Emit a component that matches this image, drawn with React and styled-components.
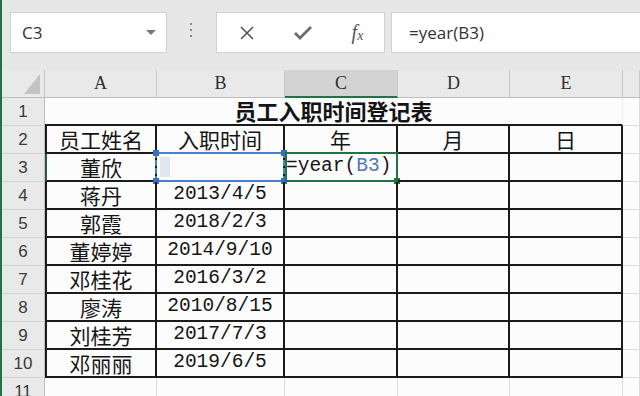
import styled, { createGlobalStyle } from 'styled-components';

const GlobalStyle = createGlobalStyle`
  html, body { margin: 0; padding: 0; background: #fff; }
  body { width: 640px; height: 396px; overflow: hidden; }
`;

const Window = styled.div`
  width: 640px;
  height: 396px;
  overflow: hidden;
  box-sizing: border-box;
  border-left: 2px solid #217346;
  background: #fcfcfd;
  display: flex;
  flex-direction: column;
`;

const FormulaBar = styled.div`
  flex: none;
  height: 70px;
  box-sizing: border-box;
  padding: 12px 0 0 8px;
  background: #e7e7e7;
  display: flex;
  align-items: flex-start;
`;

const NameBox = styled.div`
  width: 157px;
  height: 41px;
  box-sizing: border-box;
  background: #fff;
  border: 1px solid #d0d0d0;
  display: flex;
  align-items: center;
  justify-content: space-between;
  padding: 0 10px 0 11px;
  font-family: "Open Sans", "Liberation Sans", sans-serif;
  font-size: 17px;
  color: #333;
`;

const DropArrow = styled.span`
  width: 0;
  height: 0;
  border-left: 5px solid transparent;
  border-right: 5px solid transparent;
  border-top: 5px solid #777;
`;

const Grip = styled.div`
  width: 3px;
  margin: 11px 23px 0;
  display: flex;
  flex-direction: column;
  gap: 4px;
  span {
    width: 2px;
    height: 2px;
    background: #8a8a8a;
  }
`;

const ButtonBox = styled.div`
  width: 169px;
  height: 41px;
  box-sizing: border-box;
  background: #fff;
  border: 1px solid #d0d0d0;
  display: grid;
  grid-template-columns: 56px 55px 55px;
  padding-left: 2px;
  align-items: center;
  justify-items: center;
`;

const Fx = styled.span`
  font-family: "Liberation Serif", serif;
  font-style: italic;
  font-size: 20px;
  color: #555;
  sub {
    font-size: 14px;
    vertical-align: -1px;
  }
`;

const FormulaInput = styled.div`
  flex: 1;
  height: 41px;
  margin-left: 6px;
  box-sizing: border-box;
  background: #fff;
  border: 1px solid #d0d0d0;
  border-right: none;
  display: flex;
  align-items: center;
  padding-left: 17px;
  font-family: "Open Sans", "Liberation Sans", sans-serif;
  font-size: 17px;
  color: #333;
`;

const Sheet = styled.div`
  display: grid;
  grid-template-columns: 43px 112px 128px 113px 112px 113px 1fr;
  grid-auto-rows: 28px;
`;

const Corner = styled.div`
  background: #e9e9e9;
  border-right: 1px solid #c4c4c4;
  border-bottom: 1px solid #bdbdbd;
  box-sizing: border-box;
  display: flex;
  align-items: flex-end;
  justify-content: flex-end;
  padding: 0 4px 3px 0;
`;

const ColHead = styled.div`
  background: ${(p) => (p.$active ? '#d3d3d3' : '#e9e9e9')};
  border-right: 1px solid #c9c9c9;
  border-bottom: ${(p) => (p.$active ? '2px solid #217346' : '1px solid #bdbdbd')};
  box-sizing: border-box;
  display: flex;
  align-items: center;
  justify-content: center;
  font-family: "Liberation Serif", serif;
  font-size: 18px;
  color: #2e2e2e;
`;

const RowHead = styled.div`
  background: #e9e9e9;
  border-right: 1px solid #bdbdbd;
  border-bottom: 1px solid #d2d2d2;
  box-sizing: border-box;
  display: flex;
  align-items: center;
  justify-content: center;
  font-family: "Liberation Sans", sans-serif;
  font-size: 17px;
  color: #3a3a3a;
`;

const Cell = styled.div`
  position: relative;
  box-sizing: border-box;
  border-right: ${(p) => (p.$table ? '2px solid #1b1b1b' : '1px solid #dcdcdc')};
  border-bottom: ${(p) => (p.$table ? '2px solid #1b1b1b' : '1px solid #dcdcdc')};
  border-left: ${(p) => (p.$first ? `2px solid ${p.$edge || '#1b1b1b'}` : 'none')};
  display: flex;
  align-items: center;
  justify-content: ${(p) => (p.$left ? 'flex-start' : 'center')};
  padding-left: ${(p) => (p.$left ? '1px' : '0')};
  white-space: nowrap;
  line-height: 1;
  font-family: ${(p) => (p.$mono ? '"Liberation Mono", monospace' : '"Noto Sans CJK SC", sans-serif')};
  font-size: ${(p) => (p.$mono ? '19.5px' : '21px')};
  color: #141414;
`;

const Title = styled(Cell)`
  grid-column: 2 / 7;
  border-right: 1px solid #ececec;
  border-bottom: 2px solid #1b1b1b;
  padding-bottom: 3px;
  font-size: 22px;
  font-weight: 700;
`;

const RefBox = styled.div`
  position: absolute;
  left: -2px;
  right: -2px;
  top: -2px;
  bottom: -2px;
  border-top: 2px solid #4a7fd0;
  border-bottom: 2px solid #4a7fd0;
  border-left: 2px dashed #4a7fd0;
  border-right: 2px dashed #4a7fd0;
  pointer-events: none;
`;

const Handle = styled.span`
  position: absolute;
  width: 6px;
  height: 6px;
  background: ${(p) => p.$color};
  ${(p) => (p.$top ? 'top: -4px;' : 'bottom: -4px;')}
  ${(p) => (p.$right ? 'right: -4px;' : 'left: -4px;')}
`;

const Caret = styled.span`
  position: absolute;
  left: 3px;
  top: 3px;
  width: 10px;
  height: 20px;
  background: #dfe7f3;
`;

const ActiveBox = styled.div`
  position: absolute;
  left: 0;
  right: -2px;
  top: -2px;
  bottom: -2px;
  border: 2px solid #217346;
  pointer-events: none;
`;

const Ref = styled.span`
  color: #5277b8;
`;

const cols = ['A', 'B', 'C', 'D', 'E', ''];

const people = [
  ['董欣', ''],
  ['蒋丹', '2013/4/5'],
  ['郭霞', '2018/2/3'],
  ['董婷婷', '2014/9/10'],
  ['邓桂花', '2016/3/2'],
  ['廖涛', '2010/8/15'],
  ['刘桂芳', '2017/7/3'],
  ['邓丽丽', '2019/6/5'],
];

const Check = () => (
  <svg width="20" height="16" viewBox="0 0 20 16">
    <polyline points="2,8 7,13 18,2" fill="none" stroke="#6c6c6c" strokeWidth="2.8" />
  </svg>
);

const Cross = () => (
  <svg width="16" height="16" viewBox="0 0 16 16">
    <path d="M2 2 L14 14 M14 2 L2 14" stroke="#555" strokeWidth="1.6" />
  </svg>
);

const CornerMark = () => (
  <svg width="16" height="20" viewBox="0 0 16 20">
    <polygon points="16,0 16,20 0,20" fill="#c4c4c4" />
  </svg>
);

const App = () => (
  <Window>
    <GlobalStyle />
    <FormulaBar>
      <NameBox>
        C3
        <DropArrow />
      </NameBox>
      <Grip>
        <span />
        <span />
        <span />
      </Grip>
      <ButtonBox>
        <Cross />
        <Check />
        <Fx>
          f<sub>x</sub>
        </Fx>
      </ButtonBox>
      <FormulaInput>=year(B3)</FormulaInput>
    </FormulaBar>

    <Sheet>
      <Corner>
        <CornerMark />
      </Corner>
      {cols.map((c, i) => (
        <ColHead key={i} $active={c === 'C'}>
          {c}
        </ColHead>
      ))}

      <RowHead>1</RowHead>
      <Title>员工入职时间登记表</Title>
      <Cell />

      <RowHead>2</RowHead>
      <Cell $table $first>员工姓名</Cell>
      <Cell $table>入职时间</Cell>
      <Cell $table>年</Cell>
      <Cell $table>月</Cell>
      <Cell $table>日</Cell>
      <Cell />

      {people.map(([name, date], i) => {
        const row = i + 3;
        const editing = row === 3;
        return [
          <RowHead key={`h${row}`}>{row}</RowHead>,
          <Cell key={`a${row}`} $table $first $edge={editing ? '#2d5a44' : undefined}>
            {name}
          </Cell>,
          <Cell key={`b${row}`} $table $mono>
            {editing ? (
              <>
                <Caret />
                <RefBox>
                  <Handle $color="#3a6fc4" $top />
                  <Handle $color="#3a6fc4" $top $right />
                  <Handle $color="#3a6fc4" />
                  <Handle $color="#3a6fc4" $right />
                </RefBox>
              </>
            ) : (
              date
            )}
          </Cell>,
          <Cell key={`c${row}`} $table $mono $left={editing}>
            {editing && (
              <>
                =year(<Ref>B3</Ref>)
                <ActiveBox>
                  <Handle $color="#217346" $right />
                </ActiveBox>
              </>
            )}
          </Cell>,
          <Cell key={`d${row}`} $table />,
          <Cell key={`e${row}`} $table />,
          <Cell key={`f${row}`} />,
        ];
      })}

      <RowHead>11</RowHead>
      {cols.map((c, i) => (
        <Cell key={`r11${i}`} />
      ))}
    </Sheet>
  </Window>
);

export default App;
